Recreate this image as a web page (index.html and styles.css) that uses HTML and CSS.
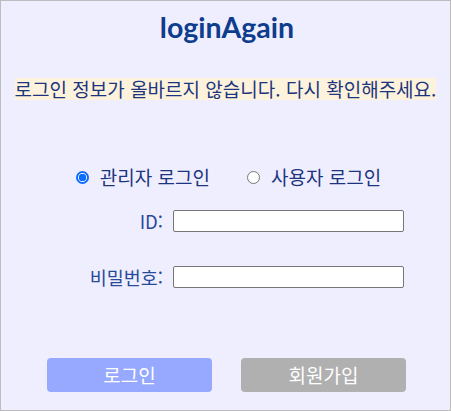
FILE: index.html
```html
<!DOCTYPE html>
<html lang="ko">
<head>
<meta charset="utf-8">
<link rel="stylesheet" href="styles.css">
</head>
<body>
<div class="box">
  <h1 class="title">loginAgain</h1>
  <p class="msg"><span class="msg-text">로그인 정보가 올바르지 않습니다. 다시 확인해주세요.</span></p>
  <div class="roles">
    <label class="role"><span class="radio checked"></span>관리자 로그인</label>
    <label class="role"><span class="radio"></span>사용자 로그인</label>
  </div>
  <div class="field">
    <span class="label">ID:</span>
    <span class="input"></span>
  </div>
  <div class="field pw">
    <span class="label">비밀번호:</span>
    <span class="input"></span>
  </div>
  <div class="buttons">
    <button class="btn login">로그인</button>
    <button class="btn join">회원가입</button>
  </div>
</div>
</body>
</html>
```

FILE: styles.css
```css
html, body {
  margin: 0;
  padding: 0;
}
body {
  font-family: "Noto Sans CJK KR", "Noto Sans", sans-serif;
}
.box {
  box-sizing: border-box;
  width: 451px;
  height: 411px;
  border: 1px solid #bdbdbd;
  background: #efeeff;
  display: flex;
  flex-direction: column;
}
.title {
  margin: 9px 0 0;
  text-align: center;
  font-family: Lato, "Noto Sans", sans-serif;
  font-weight: 700;
  font-size: 28.5px;
  line-height: 34px;
  color: #0d3d8c;
  padding-left: 3px;
}
.msg {
  margin: 34px 0 0;
  text-align: center;
  font-size: 19px;
  line-height: 22px;
}
.msg-text {
  display: inline-block;
  height: 22px;
  line-height: 22px;
  background: #fdf3dc;
  color: #1d357f;
  white-space: nowrap;
}
.roles {
  margin-top: 65px;
  display: flex;
  justify-content: center;
  gap: 37px;
  font-size: 19px;
  line-height: 24px;
  color: #1d357f;
  padding-left: 6px;
}
.role {
  display: flex;
  align-items: center;
  gap: 11px;
}
.radio {
  box-sizing: border-box;
  width: 13px;
  height: 13px;
  border-radius: 50%;
  border: 1px solid #767676;
  background: #fff;
}
.radio.checked {
  border: 2px solid #0b6cff;
  background: radial-gradient(circle, #0b6cff 0 3.5px, #fff 4px);
}
.field {
  display: flex;
  align-items: center;
  margin-top: 21px;
  color: #274a9a;
  font-size: 18.5px;
}
.field.pw {
  margin-top: 34px;
}
.label {
  width: 172px;
  text-align: right;
  padding-right: 10px;
  box-sizing: border-box;
  line-height: 22px;
}
.input {
  box-sizing: border-box;
  width: 231px;
  height: 22px;
  border: 1px solid #767676;
  border-radius: 2px;
  background: #fff;
}
.buttons {
  margin-top: 70px;
  display: flex;
  justify-content: center;
  gap: 29px;
  padding-left: 2px;
}
.btn {
  width: 165px;
  height: 34px;
  border: none;
  border-radius: 4px;
  color: #fff;
  font-family: "Noto Sans CJK KR", sans-serif;
  font-size: 19px;
  line-height: 34px;
  padding: 0;
}
.login {
  background: #97a9ff;
}
.join {
  background: #b0b0b0;
}
```
